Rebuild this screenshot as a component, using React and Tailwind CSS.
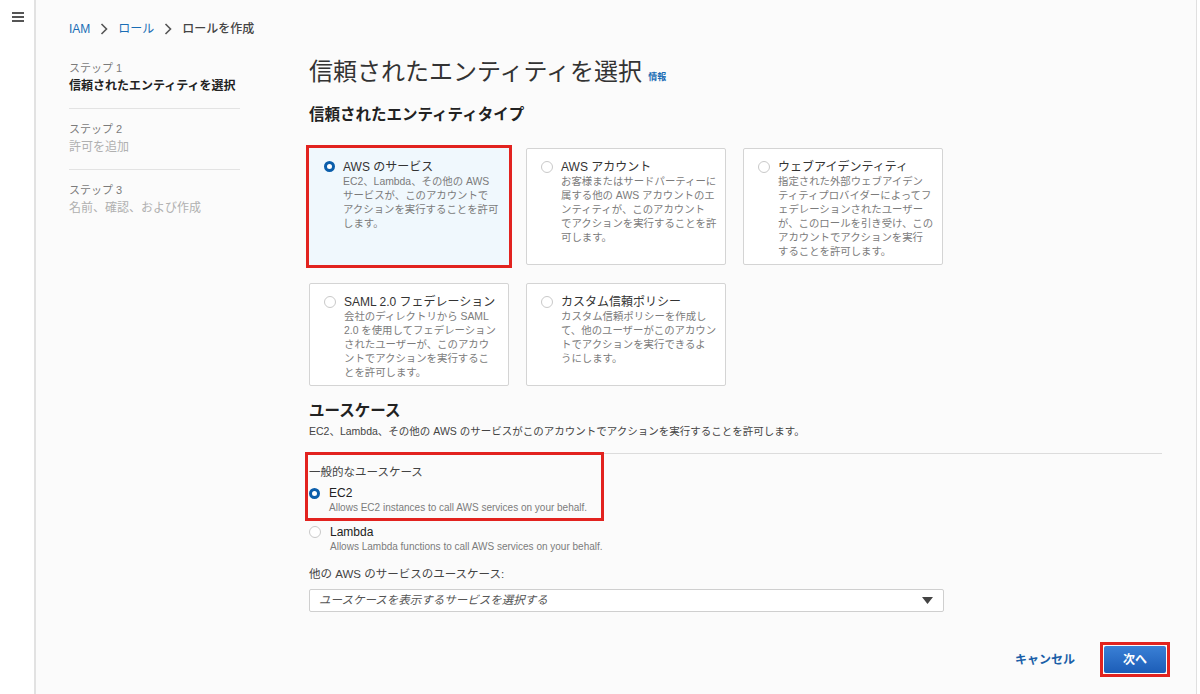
import React from "react";

const entityCards = [
  {
    title: "AWS のサービス",
    lines: ["EC2、Lambda、その他の AWS", "サービスが、このアカウントで", "アクションを実行することを許可", "します。"],
    selected: true,
  },
  {
    title: "AWS アカウント",
    lines: ["お客様またはサードパーティーに", "属する他の AWS アカウントのエ", "ンティティが、このアカウント", "でアクションを実行することを許", "可します。"],
  },
  {
    title: "ウェブアイデンティティ",
    lines: ["指定された外部ウェブアイデン", "ティティプロバイダーによってフ", "ェデレーションされたユーザー", "が、このロールを引き受け、この", "アカウントでアクションを実行", "することを許可します。"],
  },
  {
    title: "SAML 2.0 フェデレーション",
    lines: ["会社のディレクトリから SAML", "2.0 を使用してフェデレーション", "されたユーザーが、このアカウ", "ントでアクションを実行するこ", "とを許可します。"],
  },
  {
    title: "カスタム信頼ポリシー",
    lines: ["カスタム信頼ポリシーを作成し", "て、他のユーザーがこのアカウン", "トでアクションを実行できるよ", "うにします。"],
  },
];

const steps = [
  { label: "ステップ 1", title: "信頼されたエンティティを選択", active: true },
  { label: "ステップ 2", title: "許可を追加" },
  { label: "ステップ 3", title: "名前、確認、および作成" },
];

function Radio({ checked }) {
  return checked ? (
    <span className="block w-[11px] h-[11px] rounded-full border-[3.5px] border-[#0b5eab] bg-white shrink-0" />
  ) : (
    <span className="block w-[12px] h-[12px] rounded-full border border-[#c9c9c9] bg-white shrink-0" />
  );
}

function Chevron() {
  return (
    <svg width="8" height="12" viewBox="0 0 8 12" className="mx-[10px]">
      <path d="M1.5 1 L6.5 6 L1.5 11" fill="none" stroke="#555" strokeWidth="1.6" />
    </svg>
  );
}

function EntityCard({ card }) {
  return (
    <div
      className={`flex gap-[8px] pl-[14px] pt-[10px] pr-[6px] border ${
        card.selected
          ? "bg-[#f0f8fd] border-transparent outline-[3px] outline-solid outline-[#e2231f] outline-offset-0"
          : "bg-white border-[#d4d4d4] rounded-[2px]"
      }`}
    >
      <div className="pt-[2px]">
        <Radio checked={card.selected} />
      </div>
      <div>
        <div className="text-[12px] leading-[16px] text-[#333] whitespace-nowrap">{card.title}</div>
        {card.lines.map((l) => (
          <div key={l} className="text-[10.4px] leading-[14px] text-[#7b7b7b] whitespace-nowrap">
            {l}
          </div>
        ))}
      </div>
    </div>
  );
}

export default function App() {
  return (
    <div className="flex h-[694px] w-[1200px] bg-white font-['Liberation_Sans','Noto_Sans_CJK_JP',sans-serif] text-[#333]">
      <aside className="w-[36px] shrink-0 border-r-2 border-[#e2e2e2] bg-white pt-[12px] pl-[12px]">
        <div className="flex flex-col gap-[2px] w-[12px]">
          <span className="h-[2px] bg-[#555]" />
          <span className="h-[2px] bg-[#555]" />
          <span className="h-[2px] bg-[#555]" />
        </div>
      </aside>

      <main className="w-[1161px] shrink-0 bg-[#fbfbfb] border-r border-[#e0e0e0] pl-[33px] pr-[26px] pt-[21px]">
        <div className="flex items-center h-[16px] text-[12px]">
          <span className="text-[#1a6db5]">IAM</span>
          <Chevron />
          <span className="text-[#1a6db5]">ロール</span>
          <Chevron />
          <span className="text-[#444] font-medium">ロールを作成</span>
        </div>

        <div className="flex mt-[21px]">
          <nav className="w-[171px] shrink-0 pt-[3px]">
            {steps.map((s, i) => (
              <div
                key={s.label}
                className={`pb-[13px] ${i > 0 ? "pt-[13px]" : ""} ${i < 2 ? "border-b border-[#e3e3e3]" : ""}`}
              >
                <div className="text-[11px] leading-[14px] text-[#7b7b7b]">{s.label}</div>
                <div
                  className={`mt-[2px] text-[12px] leading-[18px] whitespace-nowrap ${
                    s.active ? "font-bold text-[#222]" : "text-[#b0b0b0]"
                  }`}
                >
                  {s.title}
                </div>
              </div>
            ))}
          </nav>

          <section className="ml-[69px] flex-1">
            <div className="flex items-baseline">
              <h1 className="text-[24px] leading-[28px] text-[#333] font-normal">信頼されたエンティティを選択</h1>
              <span className="ml-[6px] text-[9px] font-bold text-[#1a6db5]">情報</span>
            </div>

            <h2 className="mt-[20px] text-[15.5px] leading-[18px] font-bold text-[#222]">信頼されたエンティティタイプ</h2>

            <div className="mt-[24px] grid grid-cols-[200px_200px_200px] grid-rows-[117px_103px] gap-x-[17px] gap-y-[18px]">
              {entityCards.map((c) => (
                <EntityCard key={c.title} card={c} />
              ))}
            </div>

            <h2 className="mt-[16px] text-[15.5px] leading-[18px] font-bold text-[#222]">ユースケース</h2>
            <p className="mt-[4px] text-[10.5px] leading-[14px] text-[#444]">
              EC2、Lambda、その他の AWS のサービスがこのアカウントでアクションを実行することを許可します。
            </p>

            <div className="mt-[15px] mr-[8px] border-t border-[#dcdcdc]" />

            <div className="relative pt-[11px] pb-[6px]">
              <div className="absolute left-[-4px] top-[-2px] w-[299px] h-[69px] border-[3px] border-[#e2231f] pointer-events-none" />
              <div className="text-[11.5px] leading-[14px] text-[#444]">一般的なユースケース</div>
              <div className="mt-[7px] flex gap-[9px]">
                <div className="pt-[2px]">
                  <Radio checked />
                </div>
                <div>
                  <div className="text-[12px] leading-[15px] text-[#222]">EC2</div>
                  <div className="text-[10px] leading-[14px] text-[#7b7b7b]">
                    Allows EC2 instances to call AWS services on your behalf.
                  </div>
                </div>
              </div>
            </div>

            <div className="mt-[4px] flex gap-[9px]">
              <div className="pt-[1px]">
                <Radio />
              </div>
              <div>
                <div className="text-[12px] leading-[15px] text-[#222]">Lambda</div>
                <div className="text-[10px] leading-[14px] text-[#7b7b7b]">
                  Allows Lambda functions to call AWS services on your behalf.
                </div>
              </div>
            </div>

            <div className="mt-[13px] text-[11.5px] leading-[14px] text-[#444]">他の AWS のサービスのユースケース:</div>
            <div className="mt-[8px] w-[635px] h-[23px] flex items-center justify-between rounded-[2px] border border-[#cfcfcf] bg-white pl-[9px] pr-[10px]">
              <span className="text-[11.5px] italic text-[#555]">ユースケースを表示するサービスを選択する</span>
              <svg width="11" height="7" viewBox="0 0 11 7">
                <path d="M0 0 H11 L5.5 7 Z" fill="#444" />
              </svg>
            </div>

            <div className="mt-[30px] flex justify-end items-center">
              <span className="text-[12px] font-bold text-[#1a5fa8]">キャンセル</span>
              <span className="ml-[25px] border-[3px] border-[#e2231f] p-[1px]">
                <button className="block w-[62px] h-[27px] rounded-[2px] bg-gradient-to-b from-[#3a80d6] to-[#1c5db7] text-white text-[12px] font-bold">
                  次へ
                </button>
              </span>
            </div>
          </section>
        </div>
      </main>
    </div>
  );
}
